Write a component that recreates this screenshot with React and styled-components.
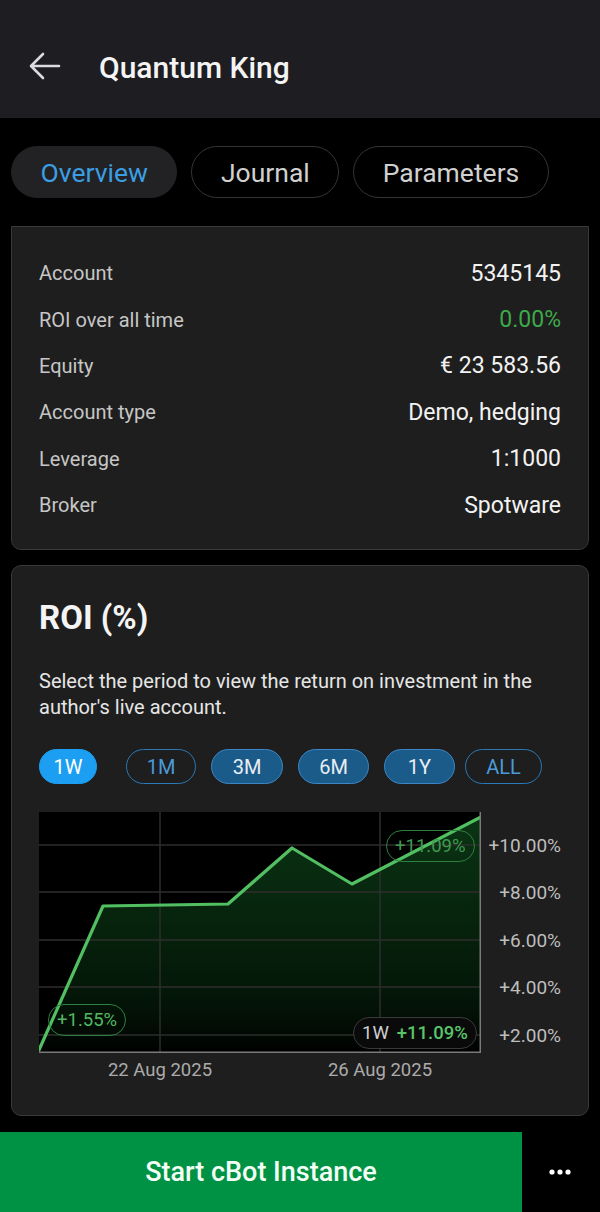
import React from 'react';
import styled, { createGlobalStyle } from 'styled-components';

const rows = [
  { label: 'Account', value: '5345145' },
  { label: 'ROI over all time', value: '0.00%', positive: true },
  { label: 'Equity', value: '€ 23 583.56' },
  { label: 'Account type', value: 'Demo, hedging' },
  { label: 'Leverage', value: '1:1000' },
  { label: 'Broker', value: 'Spotware' },
];

const periods = [
  { id: '1W', kind: 'active', width: 58, lead: 0 },
  { id: '1M', kind: 'outline', width: 70, lead: 29 },
  { id: '3M', kind: 'filled', width: 72, lead: 15 },
  { id: '6M', kind: 'filled', width: 71, lead: 15 },
  { id: '1Y', kind: 'filled', width: 71, lead: 15 },
  { id: 'ALL', kind: 'outline', width: 77, lead: 10 },
];

const yTicks = [
  { label: '+10.00%', y: 33 },
  { label: '+8.00%', y: 80 },
  { label: '+6.00%', y: 128 },
  { label: '+4.00%', y: 175 },
  { label: '+2.00%', y: 223 },
];

const points = [
  [0, 238], [64, 94], [189, 92], [253, 36], [313, 72], [442, 5],
];

const PLOT_W = 442;
const PLOT_H = 241;

const App = () => {
  const line = points.map(p => p.join(',')).join(' ');
  const area = `0,${PLOT_H} ${line} ${PLOT_W},${PLOT_H}`;

  return (
    <>
      <GlobalStyle />
      <Screen>
        <Header>
          <BackButton aria-label="Back">
            <svg width="32" height="28" viewBox="0 0 32 28" fill="none">
              <path d="M30 14H3M14 2L2 14l12 12" stroke="#dcdce0" strokeWidth="2.6" strokeLinecap="round" strokeLinejoin="round" />
            </svg>
          </BackButton>
          <Title>Quantum King</Title>
        </Header>

        <Tabs>
          <Tab $active>Overview</Tab>
          <Tab>Journal</Tab>
          <Tab>Parameters</Tab>
        </Tabs>

        <InfoCard>
          {rows.map(r => (
            <InfoRow key={r.label}>
              <InfoLabel>{r.label}</InfoLabel>
              <InfoValue $positive={r.positive}>{r.value}</InfoValue>
            </InfoRow>
          ))}
        </InfoCard>

        <RoiCard>
          <RoiTitle>ROI (%)</RoiTitle>
          <RoiText>Select the period to view the return on investment in the author's live account.</RoiText>
          <Periods>
            {periods.map(p => (
              <PeriodButton key={p.id} $kind={p.kind} $width={p.width} $lead={p.lead}>
                {p.id}
              </PeriodButton>
            ))}
          </Periods>

          <Chart>
            <Plot>
              <svg width={PLOT_W} height={PLOT_H} viewBox={`0 0 ${PLOT_W} ${PLOT_H}`}>
                <defs>
                  <linearGradient id="roiFill" x1="0" y1="0" x2="0" y2="1">
                    <stop offset="0" stopColor="#0f4a1c" stopOpacity="0.7" />
                    <stop offset="0.7" stopColor="#06240c" stopOpacity="0.7" />
                    <stop offset="1" stopColor="#000" stopOpacity="1" />
                  </linearGradient>
                </defs>
                <polygon points={area} fill="url(#roiFill)" />
                {yTicks.map(t => (
                  <line key={t.y} x1="0" x2={PLOT_W} y1={t.y} y2={t.y} stroke="#2e2e2e" strokeWidth="1.5" />
                ))}
                <line x1="121" x2="121" y1="0" y2={PLOT_H} stroke="#2e2e2e" strokeWidth="1.5" />
                <line x1="341" x2="341" y1="0" y2={PLOT_H} stroke="#2e2e2e" strokeWidth="1.5" />
                <polyline points={line} fill="none" stroke="#52c062" strokeWidth="3.2" strokeLinejoin="round" strokeLinecap="round" />
                <line x1="0" x2={PLOT_W} y1={PLOT_H - 0.75} y2={PLOT_H - 0.75} stroke="#7a7a7a" strokeWidth="1.5" />
                <line x1={PLOT_W - 0.75} x2={PLOT_W - 0.75} y1="0" y2={PLOT_H} stroke="#7a7a7a" strokeWidth="1.5" />
              </svg>
              <ValuePill $left={9} $top={192}>+1.55%</ValuePill>
              <ValuePill $left={347} $top={18} $dim>+11.09%</ValuePill>
              <SummaryPill>
                <span>1W</span>
                <strong>+11.09%</strong>
              </SummaryPill>
            </Plot>
            <YAxis>
              {yTicks.map(t => (
                <YLabel key={t.label} style={{ top: t.y }}>{t.label}</YLabel>
              ))}
            </YAxis>
            <XAxis>
              <XLabel style={{ left: 121 }}>22 Aug 2025</XLabel>
              <XLabel style={{ left: 341 }}>26 Aug 2025</XLabel>
            </XAxis>
          </Chart>
        </RoiCard>

        <BottomBar>
          <StartButton>Start cBot Instance</StartButton>
          <MoreButton aria-label="More">
            <svg width="22" height="6" viewBox="0 0 22 6">
              <circle cx="3" cy="3" r="2.6" fill="#fff" />
              <circle cx="11" cy="3" r="2.6" fill="#fff" />
              <circle cx="19" cy="3" r="2.6" fill="#fff" />
            </svg>
          </MoreButton>
        </BottomBar>
      </Screen>
    </>
  );
};

export default App;

const GlobalStyle = createGlobalStyle`
  * { box-sizing: border-box; }
  body {
    margin: 0;
    background: #000;
    font-family: Roboto, "Liberation Sans", sans-serif;
    color: #fff;
  }
`;

const Screen = styled.div`
  width: 600px;
  height: 1212px;
  background: #000;
  display: flex;
  flex-direction: column;
  overflow: hidden;
`;

const Header = styled.header`
  height: 118px;
  background: #1e1e22;
  display: flex;
  align-items: center;
  padding: 16px 0 0 29px;
  flex-shrink: 0;
`;

const BackButton = styled.button`
  background: none;
  border: none;
  padding: 0;
  width: 32px;
  height: 28px;
  display: flex;
  margin-right: 38px;
  margin-top: -2px;
`;

const Title = styled.h1`
  margin: 0;
  font-size: 30px;
  font-weight: 500;
  color: #f4f4f4;
`;

const Tabs = styled.nav`
  display: flex;
  gap: 14px;
  padding: 28px 11px;
`;

const Tab = styled.button`
  height: 52px;
  padding: 0 28.5px;
  border-radius: 26px;
  font-family: inherit;
  font-size: 26.5px;
  background: ${p => (p.$active ? '#222224' : 'transparent')};
  border: 1px solid ${p => (p.$active ? '#222224' : '#343434')};
  color: ${p => (p.$active ? '#3b9ee2' : '#d0d0d0')};
`;

const Card = styled.section`
  margin: 0 11px;
  background: #1e1e1e;
  border: 1.5px solid #383838;
  border-radius: 10px;
`;

const InfoCard = styled(Card)`
  height: 324px;
  border-top-left-radius: 0;
  border-top-right-radius: 0;
  padding: 23px 27px 0 27px;
`;

const InfoRow = styled.div`
  height: 46.4px;
  display: flex;
  align-items: center;
  justify-content: space-between;
`;

const InfoLabel = styled.span`
  font-size: 20px;
  color: #c6c6c6;
`;

const InfoValue = styled.span`
  font-size: 23px;
  color: ${p => (p.$positive ? '#3daa4a' : '#f2f2f2')};
`;

const RoiCard = styled(Card)`
  margin-top: 15px;
  height: 551px;
  padding: 30px 27px 0 27px;
`;

const RoiTitle = styled.h2`
  margin: 0;
  font-size: 33px;
  font-weight: 700;
  line-height: 44px;
  color: #f4f4f4;
`;

const RoiText = styled.p`
  margin: 28px 0 0;
  font-size: 20px;
  line-height: 26px;
  color: #e6e6e6;
  padding-right: 10px;
`;

const Periods = styled.div`
  display: flex;
  margin-top: 29px;
`;

const periodColors = {
  active: { bg: '#1c9ff2', border: '#1c9ff2', color: '#ffffff' },
  outline: { bg: 'transparent', border: '#2a78b6', color: '#4a9bd8' },
  filled: { bg: '#1b5b8a', border: '#3a86c6', color: '#e8eef4' },
};

const PeriodButton = styled.button`
  width: ${p => p.$width}px;
  margin-left: ${p => p.$lead}px;
  height: 35px;
  border-radius: 18px;
  font-family: inherit;
  font-size: 20px;
  padding: 0;
  background: ${p => periodColors[p.$kind].bg};
  border: 1.5px solid ${p => periodColors[p.$kind].border};
  color: ${p => periodColors[p.$kind].color};
`;

const Chart = styled.div`
  margin-top: 28px;
  display: grid;
  grid-template-columns: ${PLOT_W}px 1fr;
  grid-template-rows: ${PLOT_H}px 34px;
`;

const Plot = styled.div`
  position: relative;
  background: #000;
  svg { display: block; }
`;

const ValuePill = styled.span`
  position: absolute;
  left: ${p => p.$left}px;
  top: ${p => p.$top}px;
  height: 32px;
  padding: 0 8px 0 8px;
  border: 1.5px solid #2f7f40;
  border-radius: 16px;
  display: flex;
  align-items: center;
  font-size: 18.5px;
  color: ${p => (p.$dim ? '#3f9a50' : '#52b862')};
`;

const SummaryPill = styled.span`
  position: absolute;
  left: 314px;
  top: 205px;
  height: 32px;
  padding: 0 8px 0 8px;
  border: 1.5px solid #3a3a3a;
  border-radius: 16px;
  background: #0a0a0a;
  display: flex;
  align-items: center;
  gap: 8px;
  font-size: 18.5px;
  color: #cfcfcf;
  strong {
    font-weight: 500;
    color: #58c46a;
  }
`;

const YAxis = styled.div`
  position: relative;
`;

const YLabel = styled.span`
  position: absolute;
  right: 0;
  transform: translateY(-50%);
  font-size: 19px;
  color: #bdbdbd;
`;

const XAxis = styled.div`
  position: relative;
  grid-column: 1 / 2;
`;

const XLabel = styled.span`
  position: absolute;
  top: 6px;
  transform: translateX(-50%);
  white-space: nowrap;
  font-size: 18.5px;
  color: #ababab;
`;

const BottomBar = styled.footer`
  margin-top: 16px;
  height: 80px;
  display: flex;
  flex-shrink: 0;
`;

const StartButton = styled.button`
  width: 522px;
  border: none;
  background: #009244;
  color: #f4fff6;
  font-family: inherit;
  font-size: 27px;
  font-weight: 500;
`;

const MoreButton = styled.button`
  flex: 1;
  border: none;
  background: #000;
  display: flex;
  align-items: center;
  justify-content: center;
  padding-left: 4px;
`;
